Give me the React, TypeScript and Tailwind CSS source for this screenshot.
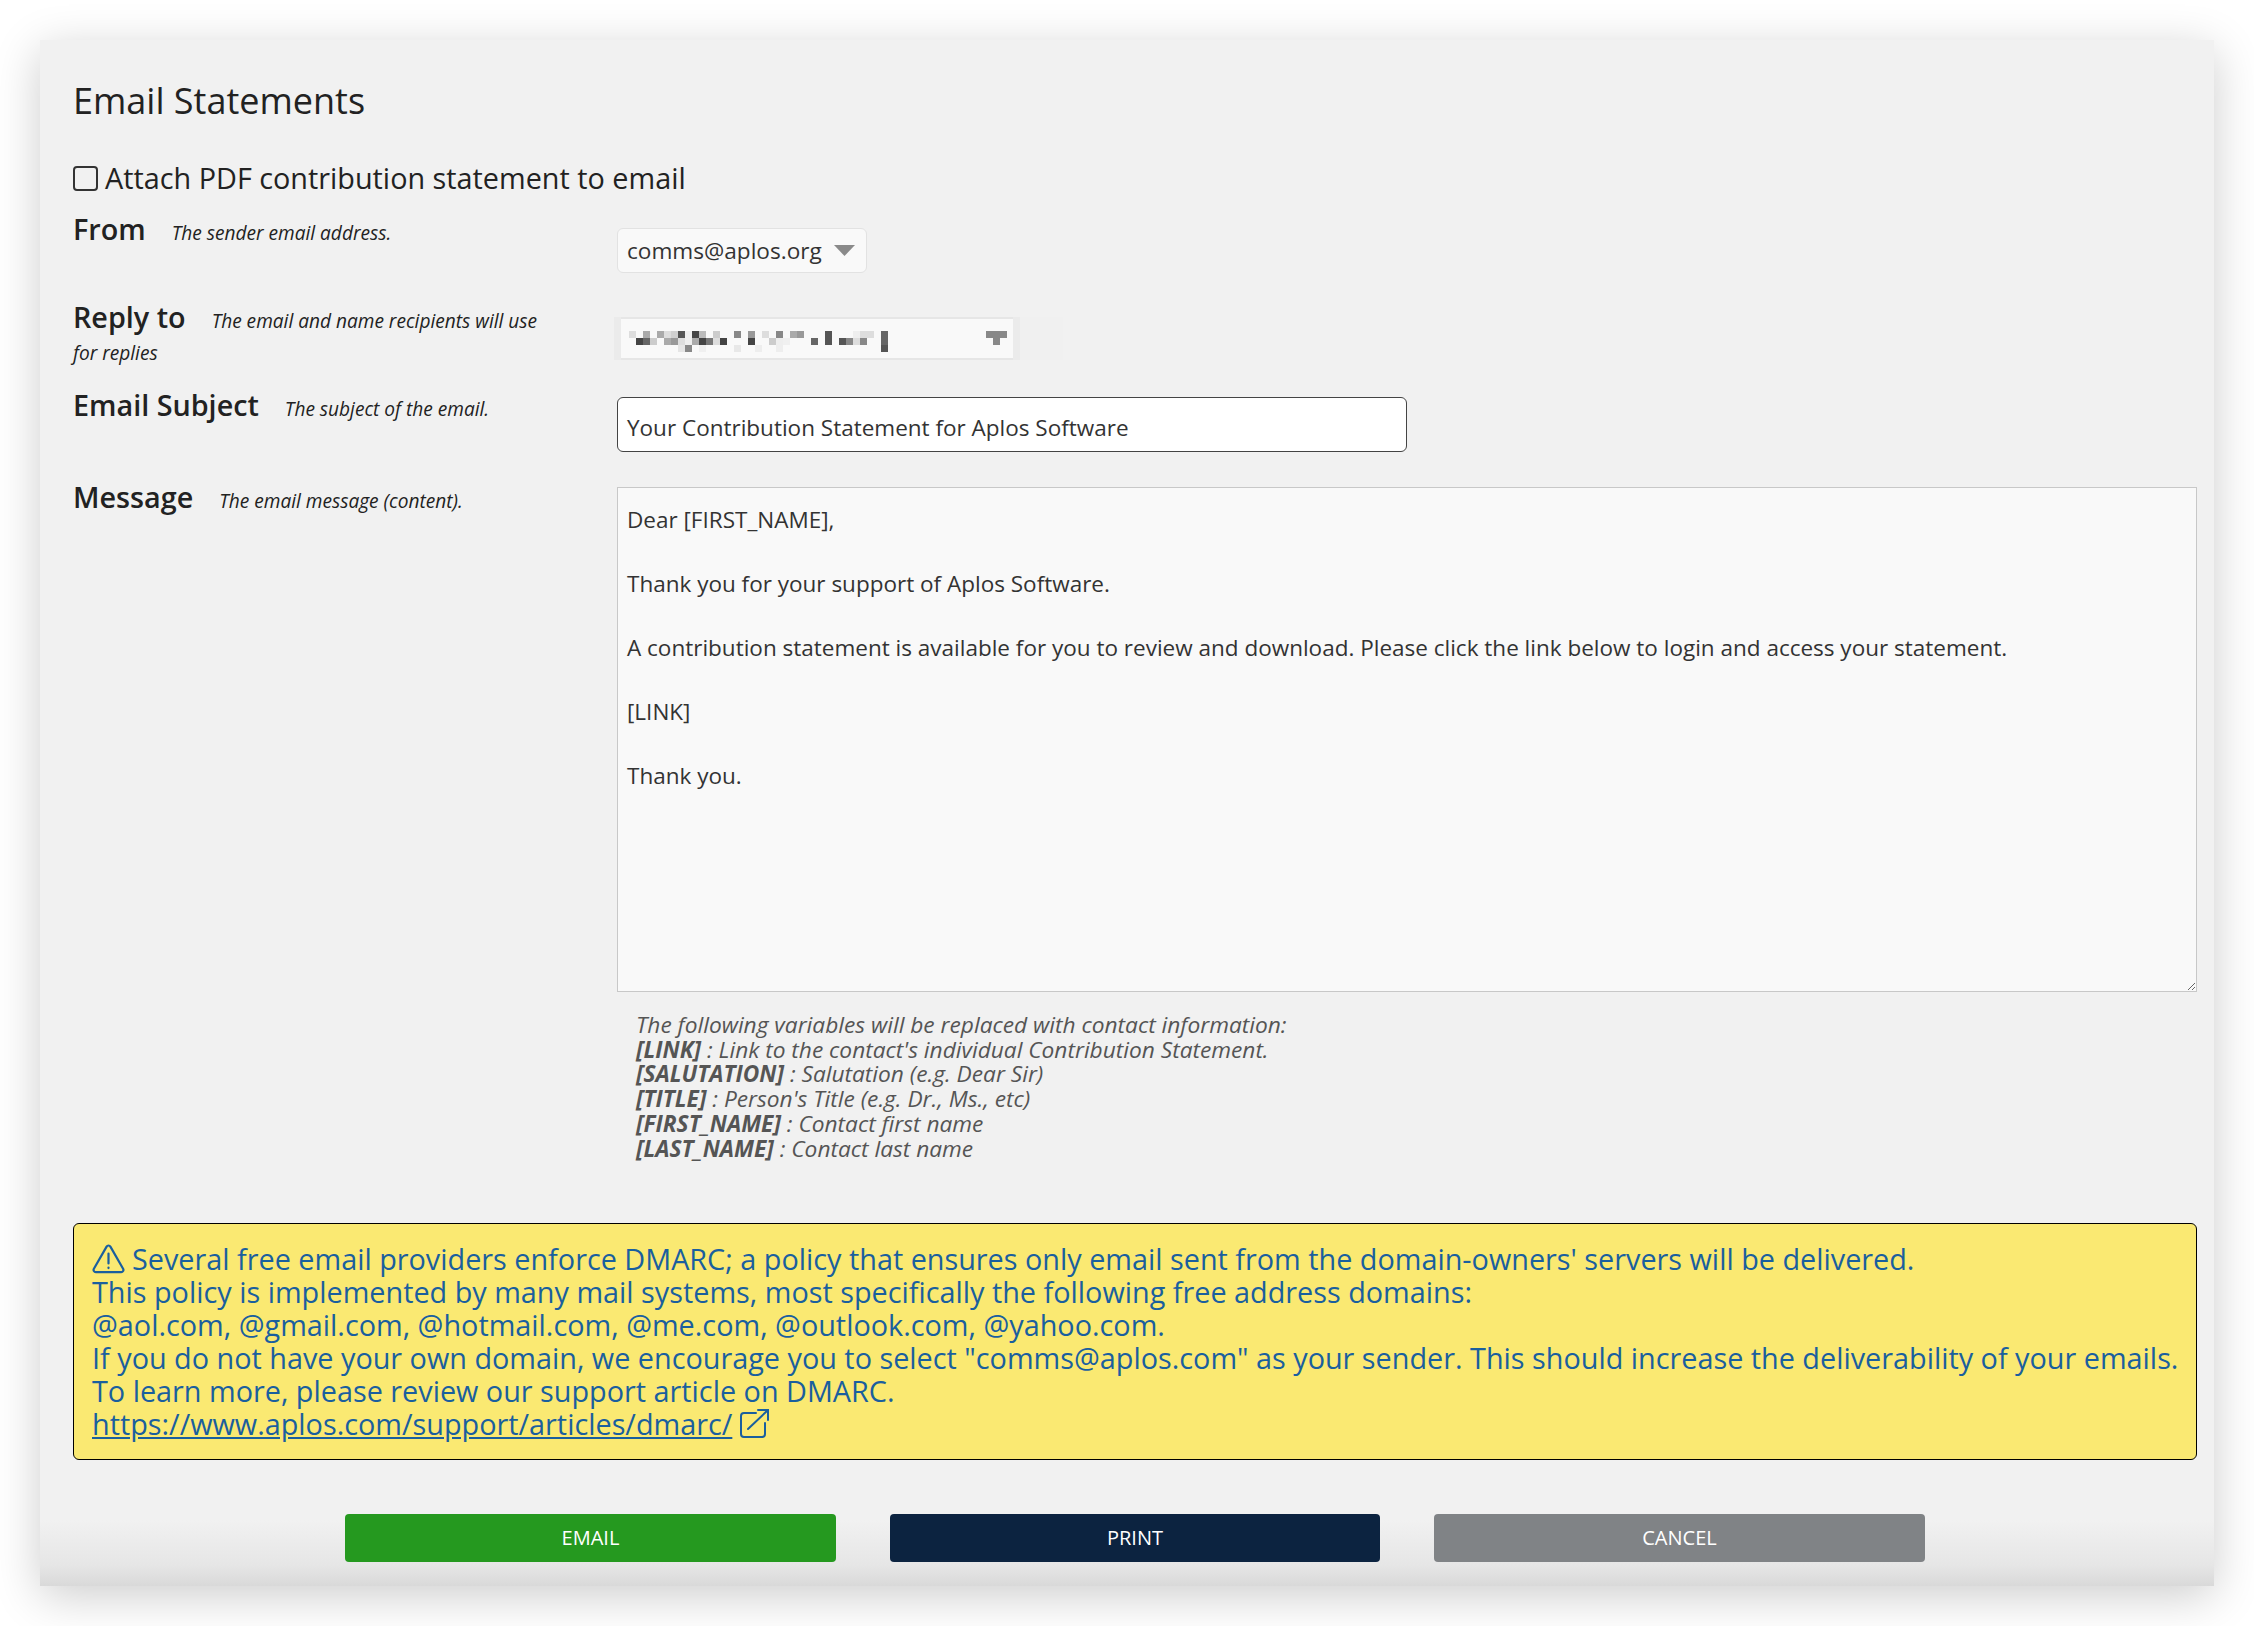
import React from "react";

const row1: [number, string][] = [[0,"#ddd"],[2,"#aaa"],[4,"#aaa"],[5,"#ddd"],[6,"#d0d0d0"],[7,"#555"],[8,"#eee"],[9,"#444"],[10,"#bbb"],[12,"#ccc"],[15,"#888"],[17,"#999"],[19,"#ddd"],[21,"#888"],[23,"#aaa"],[24,"#999"],[28,"#555"],[32,"#eee"],[33,"#ddd"],[34,"#ddd"],[36,"#666"]];
const row2: [number, string][] = [[1,"#444"],[2,"#666"],[3,"#ccc"],[5,"#aaa"],[6,"#999"],[7,"#ddd"],[8,"#eee"],[9,"#aaa"],[10,"#444"],[11,"#777"],[12,"#ddd"],[13,"#444"],[17,"#444"],[20,"#ccc"],[21,"#eee"],[22,"#f0f0f0"],[26,"#666"],[28,"#555"],[30,"#555"],[31,"#888"],[32,"#ddd"],[33,"#888"],[36,"#666"]];
const row3: [number, string][] = [[7,"#e5e5e5"],[8,"#888"],[10,"#f0f0f0"],[15,"#e8e8e8"],[18,"#eee"],[21,"#eee"],[36,"#555"]];

function Mosaic() {
  return (
    <svg width="266" height="21" viewBox="0 0 266 21" shapeRendering="crispEdges" className="block mt-[6px]">
      {[row1, row2, row3].map((row, y) =>
        row.map(([c, fill]) => <rect key={`${y}-${c}`} x={c * 7} y={y * 7} width="7" height="7" fill={fill} />)
      )}
    </svg>
  );
}

function Label({ title, desc }: { title: string; desc: string }) {
  return (
    <div className="mt-[1px] w-[470px] text-[#222]">
      <span className="text-[28.75px] font-semibold leading-[32px] mr-[26px]">{title}</span>
      <span className="text-[19.1px] italic leading-[32px]">{desc}</span>
    </div>
  );
}

export default function App() {
  return (
    <div className="w-[2254px] h-[1626px] bg-white pt-[40px] pl-[40px] font-['Open_Sans',sans-serif] text-[#333]">
      <div className="w-[2174px] h-[1546px] pl-[33px] pr-[17px] pt-[36px] flex flex-col bg-[linear-gradient(to_bottom,#f1f1f1_0,#f1f1f1_1480px,#e6e6e6_1525px,#d9d9d9_1546px)] shadow-[0_10px_44px_rgba(0,0,0,0.2)]">
        <h1 className="text-[36px] leading-[50px] text-[#222] font-normal">Email Statements</h1>

        <label className="mt-[34px] flex items-center h-[36px] text-[28.8px] text-[#222]">
          <span className="w-[25px] h-[25px] rounded-[4px] border-2 border-[#333] bg-transparent mr-[7px]" />
          Attach PDF contribution statement to email
        </label>

        <div className="mt-[16px] flex h-[88px]">
          <div className="w-[544px]"><Label title="From" desc="The sender email address." /></div>
          <div className="mt-[16px] w-[250px] h-[45px] rounded-[6px] border-[1.5px] border-[#e2e2e2] bg-[#f9f9f9] pl-[9px] pr-[11px] flex items-center justify-between text-[22.6px] leading-[32px]">
            <span>comms@aplos.org</span>
            <svg width="21" height="11" viewBox="0 0 21 11"><path d="M0 0h21L10.5 11z" fill="#8a8a8a" /></svg>
          </div>
        </div>

        <div className="flex h-[88px]">
          <div className="w-[541px]"><Label title="Reply to" desc="The email and name recipients will use for replies" /></div>
          <div className="mt-[17px] h-[43px] flex items-stretch bg-[#f0f0f0] pr-[43px]">
            <div className="w-[7px] bg-[#ebebeb]" />
            <div className="w-[392px] bg-[#f9f9f9] border-y-2 border-[#e6e6e6] flex items-center justify-between pl-[8px] pr-[6px]">
              <Mosaic />
              <svg width="21" height="14" viewBox="0 0 21 14" shapeRendering="crispEdges" className="mt-[-1px]"><path d="M0 0h21v7h-7v7H7V7H0z" fill="#888" /></svg>
            </div>
            <div className="w-[7px] bg-[#ebebeb]" />
          </div>
        </div>

        <div className="flex h-[92px]">
          <div className="w-[544px]"><Label title="Email Subject" desc="The subject of the email." /></div>
          <div className="mt-[9px] w-[790px] h-[55px] rounded-[6px] border-[1.5px] border-[#444] bg-white pl-[9px] flex items-center text-[22.5px] pt-[6px]">
            Your Contribution Statement for Aplos Software
          </div>
        </div>

        <div className="flex">
          <div className="w-[544px]"><Label title="Message" desc="The email message (content)." /></div>
          <div className="mt-[7px] flex flex-col">
            <textarea
              readOnly
              className="block w-[1580px] h-[505px] border-[1.5px] border-[#c8c8c8] bg-[#f9f9f9] px-[9px] pt-[16px] text-[22.5px] leading-[32px] text-[#333] outline-none"
              defaultValue={"Dear [FIRST_NAME],\n\nThank you for your support of Aplos Software.\n\nA contribution statement is available for you to review and download. Please click the link below to login and access your statement.\n\n[LINK]\n\nThank you."}
            />
            <div className="mt-[21px] ml-[19px] text-[22.7px] leading-[24.7px] italic text-[#555]">
              <div>The following variables will be replaced with contact information:</div>
              <div><b>[LINK]</b> : Link to the contact's individual Contribution Statement.</div>
              <div><b>[SALUTATION]</b> : Salutation (e.g. Dear Sir)</div>
              <div><b>[TITLE]</b> : Person's Title (e.g. Dr., Ms., etc)</div>
              <div><b>[FIRST_NAME]</b> : Contact first name</div>
              <div><b>[LAST_NAME]</b> : Contact last name</div>
            </div>
          </div>
        </div>

        <div className="mt-[62px] w-[2124px] h-[237px] rounded-[6px] border-[1.5px] border-black bg-[#fae972] pl-[18px] pt-[18px] text-[28.8px] leading-[33px] text-[#1a5f9e]">
          <div className="flex items-center">
            <svg width="33" height="30" viewBox="0 0 33 30" fill="none" stroke="#1a5f9e" strokeWidth="2.2" strokeLinejoin="round" strokeLinecap="round" className="mr-[7px]">
              <path d="M14.6 2.6c.9-1.5 2.9-1.5 3.8 0l12.7 22.2c.9 1.5-.2 3.4-1.9 3.4H3.8c-1.7 0-2.8-1.9-1.9-3.4z" />
              <path d="M16.5 9.5v10M16.5 23.5v.6" />
            </svg>
            <span>Several free email providers enforce DMARC; a policy that ensures only email sent from the domain-owners' servers will be delivered.</span>
          </div>
          <div>This policy is implemented by many mail systems, most specifically the following free address domains:</div>
          <div>@aol.com, @gmail.com, @hotmail.com, @me.com, @outlook.com, @yahoo.com.</div>
          <div>If you do not have your own domain, we encourage you to select "comms@aplos.com" as your sender. This should increase the deliverability of your emails.</div>
          <div>To learn more, please review our support article on DMARC.</div>
          <a className="inline-flex items-center underline" href="#">
            https://www.aplos.com/support/articles/dmarc/
            <svg width="30" height="30" viewBox="0 0 30 30" fill="none" stroke="#1a5f9e" strokeWidth="2" strokeLinecap="round" className="ml-[8px] -mt-[2px]">
              <path d="M16 5H4a3 3 0 0 0-3 3v18a3 3 0 0 0 3 3h18a3 3 0 0 0 3-3V15" />
              <path d="M8 21L28 2M18 2h10v10" />
            </svg>
          </a>
        </div>

        <div className="mt-[54px] ml-[272px] flex gap-[54px] text-white text-[20px]">
          <button className="w-[491px] h-[48px] rounded-[4px] bg-[#25991f]">EMAIL</button>
          <button className="w-[490px] h-[48px] rounded-[4px] bg-[#0c2340]">PRINT</button>
          <button className="w-[491px] h-[48px] rounded-[4px] bg-[#808386]">CANCEL</button>
        </div>
      </div>
    </div>
  );
}
